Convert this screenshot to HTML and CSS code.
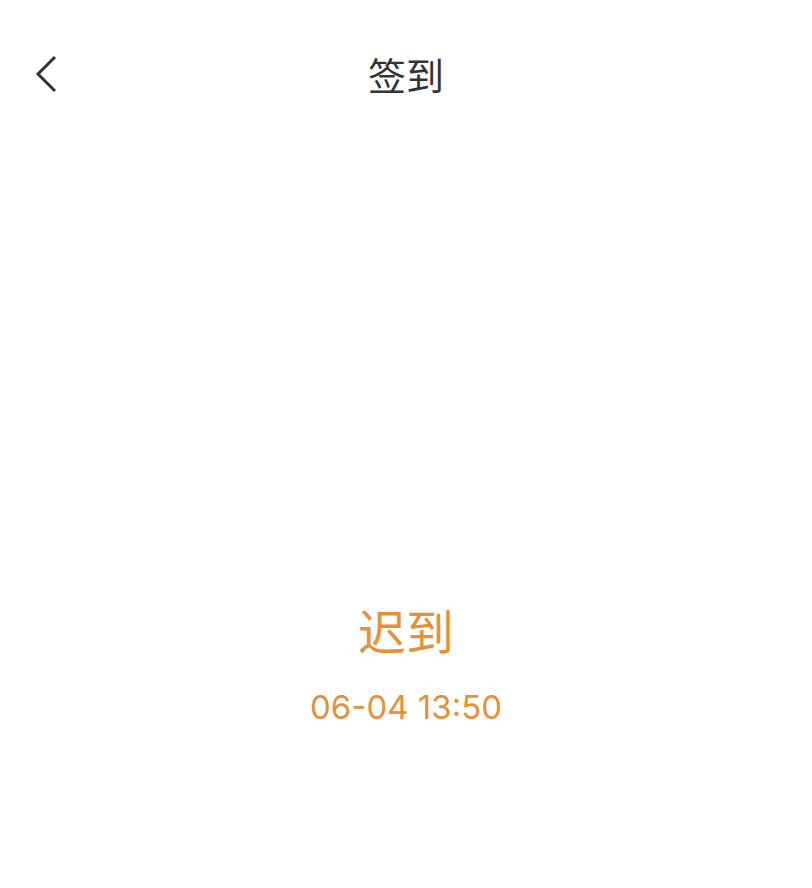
FILE: index.html
```html
<!DOCTYPE html>
<html lang="zh-CN">
<head>
  <meta charset="UTF-8">
  <meta name="viewport" content="width=device-width, initial-scale=1.0">
  <title>签到</title>
  <link rel="stylesheet" href="styles.css">
</head>
<body>
  <header class="nav">
    <a class="back" href="#">
      <svg width="26" height="40" viewBox="0 0 26 40">
        <path d="M22 3 L5 20 L22 37" fill="none" stroke="#333" stroke-width="3" />
      </svg>
    </a>
    <h1 class="title">签到</h1>
  </header>
  <main class="result">
    <div class="status">迟到</div>
    <div class="time">06-04 13:50</div>
  </main>
</body>
</html>
```

FILE: styles.css
```css
body {
  margin: 0;
  background: #fff;
  font-family: "Noto Sans", "Noto Sans CJK SC", sans-serif;
}

.nav {
  height: 150px;
  display: flex;
  align-items: flex-start;
  justify-content: center;
  position: relative;
}

.back {
  position: absolute;
  left: 33px;
  top: 54px;
}

.title {
  margin: 48px 0 0;
  font-size: 38px;
  font-weight: 400;
  color: #333;
  line-height: 54px;
}

.result {
  padding-top: 451px;
  text-align: center;
  color: #e5913a;
}

.status {
  font-size: 48px;
  line-height: 62px;
}

.time {
  margin-top: 20px;
  font-family: Inter, "Noto Sans", sans-serif;
  font-size: 33px;
  line-height: 48px;
}
```
